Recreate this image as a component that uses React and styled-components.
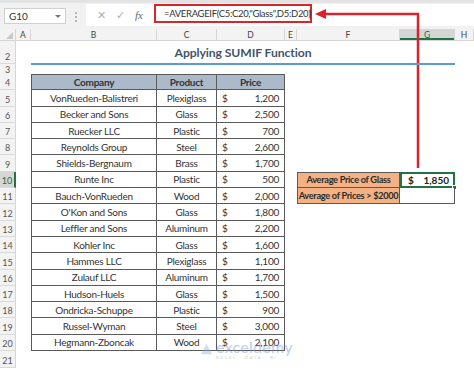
import React from "react";
import styled, { createGlobalStyle } from "styled-components";

const Global = createGlobalStyle`
  html, body { margin: 0; padding: 0; background: #ffffff; }
  body { font-family: "Lato", "Open Sans", sans-serif; width: 474px; height: 368px; overflow: hidden; }
  * { box-sizing: border-box; }
`;

const COLS = "16px 15px 126px 60px 68px 12px 103px 55px 1fr";

const Page = styled.div`
  position: relative;
  width: 474px;
  height: 368px;
  overflow: hidden;
  background: #fff;
`;

const FormulaBar = styled.div`
  height: 29px;
  background: #f1f1f1;
  border-top: 3px solid #e3e3e3;
  display: flex;
  align-items: flex-start;
  padding-top: 1px;
`;

const NameBox = styled.div`
  margin: 4px 0 0 4px;
  width: 62px;
  height: 16px;
  background: #fff;
  border: 1px solid #d0d0d0;
  display: flex;
  align-items: center;
  justify-content: space-between;
  padding: 0 4px 0 4px;
  font-size: 10px;
  color: #333;
`;

const Caret = styled.span`
  width: 0;
  height: 0;
  border-left: 3px solid transparent;
  border-right: 3px solid transparent;
  border-top: 3px solid #777;
`;

const Dots = styled.div`
  width: 20px;
  margin-top: 8px;
  display: flex;
  flex-direction: column;
  align-items: center;
  gap: 2px;
  & span { width: 2px; height: 2px; background: #b5b5b5; }
`;

const IconBox = styled.div`
  width: 68px;
  height: 22px;
  background: #fff;
  display: flex;
  align-items: center;
  justify-content: space-around;
  padding: 0 6px;
  color: #b0b0b0;
  font-size: 11px;
`;

const Fx = styled.span`
  font-family: "Liberation Serif", serif;
  font-style: italic;
  color: #666;
  font-size: 11px;
`;

const FormulaInput = styled.div`
  flex: 1;
  height: 22px;
  background: #fff;
  display: flex;
  align-items: flex-start;
`;

const RedBox = styled.div`
  width: 158px;
  height: 19px;
  border: 2px solid #d9232d;
  display: flex;
  align-items: center;
  padding-left: 8px;
  font-size: 9.5px;
  letter-spacing: -0.33px;
  color: #333;
  white-space: nowrap;
`;

const HeaderRow = styled.div`
  display: grid;
  grid-template-columns: ${COLS};
  height: 12px;
  background: #f3f3f3;
  border-bottom: 1px solid #d6d6d6;
`;

const Corner = styled.div`
  position: relative;
  border-right: 1px solid #d6d6d6;
  &::after {
    content: "";
    position: absolute;
    right: 2px;
    bottom: 1px;
    border-left: 7px solid transparent;
    border-bottom: 7px solid #c8c8c8;
  }
`;

const ColHead = styled.div`
  display: flex;
  align-items: center;
  justify-content: center;
  font-size: 8.5px;
  border-right: 1px solid #d6d6d6;
  background: ${(p) => (p.$active ? "#d6d6d6" : "transparent")};
  box-shadow: ${(p) => (p.$active ? "inset 0 -2px 0 #217346" : "none")};
  color: ${(p) => (p.$active ? "#1e6b40" : "#444")};
`;

const Row = styled.div`
  display: grid;
  grid-template-columns: ${COLS};
  height: ${(p) => p.$h}px;
`;

const RowNum = styled.div`
  background: ${(p) => (p.$active ? "#d6d6d6" : "#f3f3f3")};
  border-bottom: 1px solid #dadada;
  border-right: ${(p) => (p.$active ? "2px solid #217346" : "1px solid #d6d6d6")};
  color: ${(p) => (p.$active ? "#1e6b40" : "#555")};
  font-size: 9px;
  display: flex;
  align-items: flex-end;
  justify-content: center;
  padding-bottom: 1px;
`;

const Title = styled.div`
  grid-column: 3 / 9;
  border-bottom: 2px solid #5b9bd5;
  display: flex;
  align-items: flex-end;
  justify-content: center;
  padding-bottom: 3px;
  font-weight: 700;
  font-size: 12.2px;
  letter-spacing: -0.1px;
  color: #44546a;
  margin-bottom: -1px;
  position: relative;
  z-index: 1;
`;

const Cell = styled.div`
  grid-column: ${(p) => p.$col};
  display: flex;
  align-items: center;
  justify-content: center;
  font-size: 10px;
  letter-spacing: -0.25px;
  white-space: nowrap;
  min-width: 0;
  color: #333;
  border-right: 1px solid #5a5a5a;
  border-bottom: 1px solid #5a5a5a;
  border-left: ${(p) => (p.$first ? "1px solid #5a5a5a" : "none")};
  border-top: ${(p) => (p.$top ? "1px solid #5a5a5a" : "none")};
  background: ${(p) => p.$bg || "#fff"};
  font-weight: ${(p) => (p.$bold ? 700 : 400)};
`;

const PriceCell = styled(Cell)`
  justify-content: space-between;
  padding: 0 5px;
`;

const SummaryCell = styled(Cell)`
  background: #f4b183;
  font-weight: 700;
  font-size: 9.2px;
  letter-spacing: -0.3px;
  color: #2b2b2b;
  border-left: 1px solid #5a5a5a;
  border-top: ${(p) => (p.$top ? "1px solid #5a5a5a" : "none")};
`;

const ResultCell = styled.div`
  grid-column: 8;
  position: relative;
  display: flex;
  align-items: center;
  justify-content: space-between;
  padding: 0 4px 0 6px;
  font-size: 10px;
  font-weight: 700;
  color: #222;
  background: #fff;
  border: ${(p) => (p.$selected ? "2px solid #217346" : "none")};
  border-right: ${(p) => (p.$selected ? "2px solid #217346" : "1px solid #5a5a5a")};
  border-bottom: ${(p) => (p.$selected ? "2px solid #217346" : "1px solid #5a5a5a")};
`;

const Handle = styled.span`
  position: absolute;
  right: -4px;
  bottom: -4px;
  width: 5px;
  height: 5px;
  background: #217346;
  border: 1px solid #fff;
`;

const Overlay = styled.svg`
  position: absolute;
  left: 0;
  top: 0;
  pointer-events: none;
`;

const Watermark = styled.div`
  position: absolute;
  left: 200px;
  top: 339px;
  display: flex;
  align-items: center;
  gap: 3px;
  opacity: 0.4;
  pointer-events: none;
`;

const WmText = styled.div`
  display: flex;
  flex-direction: column;
  line-height: 1;
  & b { font-size: 16px; color: #6f8fc8; font-weight: 600; letter-spacing: 0.2px; }
  & small { font-size: 4.5px; color: #8a8a8a; letter-spacing: 1.5px; margin-top: 1px; }
`;

const data = [
  ["VonRueden-Balistreri", "Plexiglass", "1,200"],
  ["Becker and Sons", "Glass", "2,500"],
  ["Ruecker LLC", "Plastic", "700"],
  ["Reynolds Group", "Steel", "2,600"],
  ["Shields-Bergnaum", "Brass", "1,700"],
  ["Runte Inc", "Plastic", "500"],
  ["Bauch-VonRueden", "Wood", "2,000"],
  ["O'Kon and Sons", "Glass", "1,800"],
  ["Leffler and Sons", "Aluminum", "2,200"],
  ["Kohler Inc", "Glass", "1,600"],
  ["Hammes LLC", "Plexiglass", "1,100"],
  ["Zulauf LLC", "Aluminum", "1,700"],
  ["Hudson-Huels", "Glass", "1,500"],
  ["Ondricka-Schuppe", "Plastic", "900"],
  ["Russel-Wyman", "Steel", "3,000"],
  ["Hegmann-Zboncak", "Wood", "2,100"],
];

const cols = ["A", "B", "C", "D", "E", "F", "G", "H"];

export default function App() {
  return (
    <Page>
      <Global />
      <FormulaBar>
        <NameBox>
          G10
          <Caret />
        </NameBox>
        <Dots>
          <span />
          <span />
          <span />
        </Dots>
        <IconBox>
          <span>✕</span>
          <span>✓</span>
          <Fx>fx</Fx>
        </IconBox>
        <FormulaInput>
          <RedBox>=AVERAGEIF(C5:C20,"Glass",D5:D20)</RedBox>
        </FormulaInput>
      </FormulaBar>
      <HeaderRow>
        <Corner />
        {cols.map((c) => (
          <ColHead key={c} $active={c === "G"}>
            {c}
          </ColHead>
        ))}
      </HeaderRow>
      <Row $h={23}>
        <RowNum>2</RowNum>
        <Title>Applying SUMIF Function</Title>
      </Row>
      <Row $h={10}>
        <RowNum>3</RowNum>
      </Row>
      <Row $h={16.3}>
        <RowNum>4</RowNum>
        <Cell $col={3} $first $top $bg="#acb9ca" $bold>
          Company
        </Cell>
        <Cell $col={4} $top $bg="#acb9ca" $bold>
          Product
        </Cell>
        <Cell $col={5} $top $bg="#acb9ca" $bold>
          Price
        </Cell>
      </Row>
      {data.map(([company, product, price], i) => {
        const r = i + 5;
        return (
          <Row key={r} $h={16.3}>
            <RowNum $active={r === 10}>{r}</RowNum>
            <Cell $col={3} $first>
              {company}
            </Cell>
            <Cell $col={4}>{product}</Cell>
            <PriceCell $col={5}>
              <span>$</span>
              <span>{price}</span>
            </PriceCell>
            {r === 10 && (
              <>
                <SummaryCell $col={7} $top>
                  Average Price of Glass
                </SummaryCell>
                <ResultCell $selected>
                  <span>$</span>
                  <span>1,850</span>
                  <Handle />
                </ResultCell>
              </>
            )}
            {r === 11 && (
              <>
                <SummaryCell $col={7}>Average of Prices &gt; $2000</SummaryCell>
                <ResultCell />
              </>
            )}
          </Row>
        );
      })}
      <Row $h={17}>
        <RowNum>21</RowNum>
      </Row>
      <Overlay width="474" height="368" viewBox="0 0 474 368">
        <polyline
          points="324,14 418,14 418,168"
          fill="none"
          stroke="#d9232d"
          strokeWidth="2.5"
        />
        <polygon points="315,14 326,9 326,19" fill="#d9232d" />
      </Overlay>
      <Watermark>
        <svg width="13" height="13" viewBox="0 0 14 14">
          <polygon points="7,1 13,12 1,12" fill="#8aa6d8" />
        </svg>
        <WmText>
          <b>exceldemy</b>
          <small>EXCEL · DATA · BI</small>
        </WmText>
      </Watermark>
    </Page>
  );
}
